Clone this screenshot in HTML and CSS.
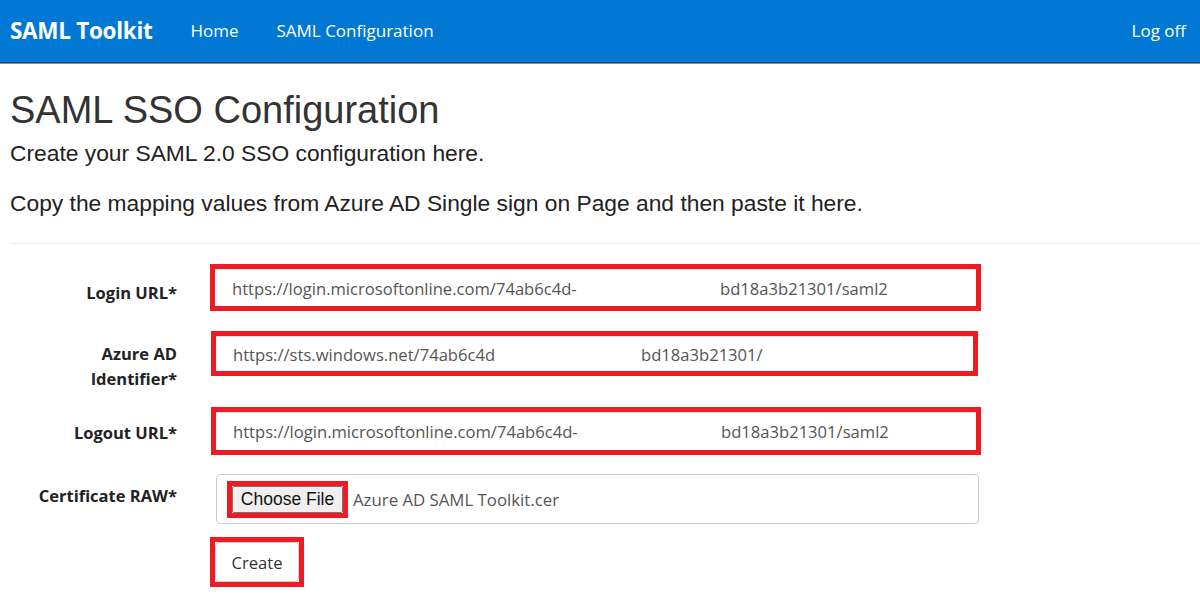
FILE: index.html
```html
<!DOCTYPE html>
<html lang="en">
<head>
<meta charset="utf-8">
<title>SAML SSO Configuration</title>
<link rel="stylesheet" href="styles.css">
</head>
<body>
<nav class="navbar">
  <a class="brand" href="#">SAML Toolkit</a>
  <a class="nav-link" href="#">Home</a>
  <a class="nav-link" href="#">SAML Configuration</a>
  <span class="spacer"></span>
  <a class="nav-link logoff" href="#">Log off</a>
</nav>
<main class="content">
  <h2 class="title">SAML SSO Configuration</h2>
  <h4 class="subtitle">Create your SAML 2.0 SSO configuration here.</h4>
  <p class="lead">Copy the mapping values from Azure AD Single sign on Page and then paste it here.</p>
  <hr class="rule">
  <form class="form">
    <div class="row row-login">
      <label class="label label-login">Login URL*</label>
      <div class="mark mark-login">
        <div class="field"><span class="part">https://login.microsoftonline.com/74ab6c4d-</span><span>bd18a3b21301/saml2</span></div>
      </div>
    </div>
    <div class="row row-azure">
      <label class="label label-azure">Azure AD<br>Identifier*</label>
      <div class="mark mark-azure">
        <div class="field"><span class="part part-short">https://sts.windows.net/74ab6c4d</span><span>bd18a3b21301/</span></div>
      </div>
    </div>
    <div class="row row-logout">
      <label class="label label-logout">Logout URL*</label>
      <div class="mark mark-logout">
        <div class="field"><span class="part">https://login.microsoftonline.com/74ab6c4d-</span><span>bd18a3b21301/saml2</span></div>
      </div>
    </div>
    <div class="row row-cert">
      <label class="label label-cert">Certificate RAW*</label>
      <div class="file-box">
        <span class="mark mark-choose"><span class="choose">Choose File</span></span>
        <span class="filename">Azure AD SAML Toolkit.cer</span>
      </div>
    </div>
    <div class="row row-submit">
      <span class="label"></span>
      <span class="mark mark-create"><span class="create">Create</span></span>
    </div>
  </form>
</main>
</body>
</html>
```

FILE: styles.css
```css
* { box-sizing: border-box; }

body {
  margin: 0;
  background: #fff;
  color: #333;
  font-family: "Open Sans", "Noto Sans", sans-serif;
}

.navbar {
  display: flex;
  align-items: center;
  height: 63px;
  padding: 0 14px 1px 10px;
  background: #0078d4;
  border-bottom: 1px solid #1c4d7c;
  box-shadow: 0 1px 0 #8a8a8a;
}

.navbar a { text-decoration: none; color: #fff; }

.brand {
  font-weight: 700;
  font-size: 22.5px;
  letter-spacing: -0.3px;
  margin-right: 38px;
}

.nav-link {
  font-size: 17px;
  margin-right: 38px;
}

.nav-link.logoff { margin-right: 0; }

.spacer { flex: 1; }

.content { padding: 0 0 0 10px; }

.title {
  font-family: "Liberation Sans", Arial, sans-serif;
  font-weight: 400;
  font-size: 38px;
  line-height: 40px;
  margin: 27px 0 0;
  color: #333;
}

.subtitle {
  font-family: "Liberation Sans", Arial, sans-serif;
  font-weight: 400;
  font-size: 22.8px;
  line-height: 28px;
  margin: 9px 0 0;
  color: #222;
}

.lead {
  font-family: "Liberation Sans", Arial, sans-serif;
  font-size: 22.8px;
  line-height: 28px;
  margin: 22px 0 0;
  color: #222;
}

.rule {
  border: 0;
  border-top: 1px solid #eee;
  margin: 26px 0 0;
}

.form { margin-top: 20px; }

.row {
  display: flex;
  align-items: flex-start;
}

.label {
  width: 167px;
  flex: none;
  margin-right: 33px;
  text-align: right;
  font-weight: 700;
  font-size: 16.5px;
  line-height: 25px;
  color: #222;
}

.label-login { padding-top: 16px; }
.label-azure { padding-top: 10px; }
.label-logout { padding-top: 13px; }
.label-cert { padding-top: 9px; }

.row-azure { margin-top: 20px; }
.row-logout { margin-top: 16px; }
.row-cert { margin-top: 19px; }
.row-submit { margin-top: 13px; }

.mark {
  display: block;
  border: 5px solid #ed1c24;
  background: #fff;
}

.mark-login { width: 771px; height: 47px; }
.mark-azure { width: 767px; height: 45px; margin-left: 1px; }
.mark-logout { width: 770px; height: 48px; margin-left: 1px; }

.field {
  height: 100%;
  border-top: 1px solid #e4e4e4;
  padding-left: 17px;
  display: flex;
  align-items: center;
  font-size: 16.6px;
  color: #555;
  white-space: nowrap;
}

.part {
  display: inline-block;
  width: 488px;
}

.part-short { width: 408px; }

.file-box {
  width: 763px;
  height: 50px;
  margin-left: 6px;
  border: 1px solid #ccc;
  border-radius: 4px;
  display: flex;
  align-items: center;
  padding-left: 10px;
}

.mark-choose {
  display: inline-flex;
  width: 121px;
  height: 37px;
}

.choose {
  flex: 1;
  display: flex;
  align-items: center;
  justify-content: center;
  background: #efefef;
  border: 1px solid #767676;
  border-radius: 2px;
  font-family: "Liberation Sans", Arial, sans-serif;
  font-size: 17.5px;
  color: #111;
}

.filename {
  margin-left: 5px;
  font-size: 16.8px;
  color: #555;
}

.mark-create {
  display: inline-flex;
  width: 94px;
  height: 50px;
}

.create {
  flex: 1;
  display: flex;
  align-items: center;
  justify-content: center;
  background: #fff;
  border: 1px solid #ccc;
  border-radius: 4px;
  font-size: 16.6px;
  color: #333;
}
```
